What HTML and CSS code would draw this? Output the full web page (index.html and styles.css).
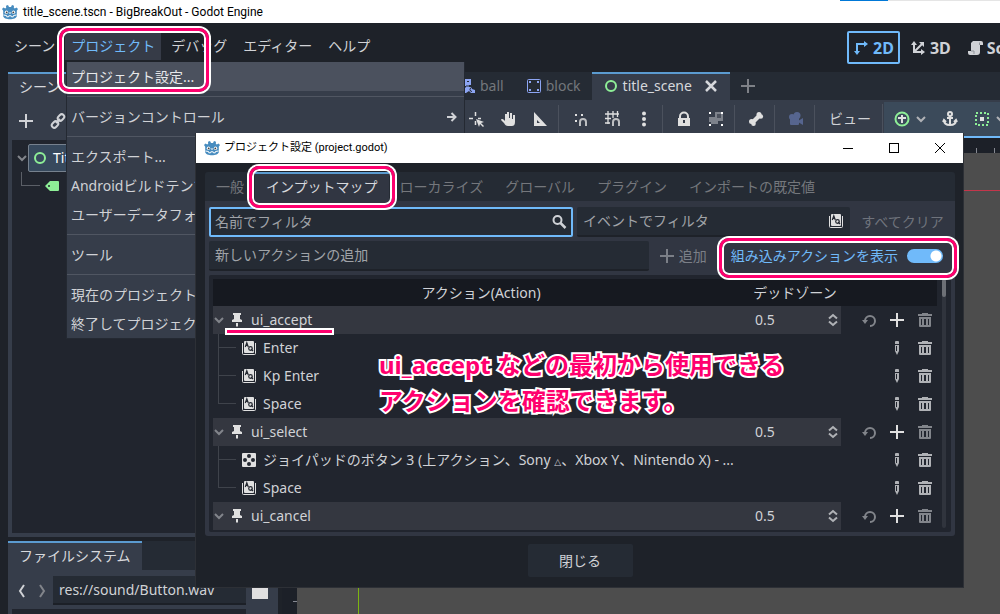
FILE: index.html
```html
<!DOCTYPE html>
<html lang="ja">
<head>
<meta charset="utf-8">
<title>title_scene.tscn - BigBreakOut - Godot Engine</title>
<link rel="stylesheet" href="styles.css">
</head>
<body>
<svg class="defs" aria-hidden="true">
  <symbol id="godot" viewBox="0 0 16 16">
    <path fill="#478cbf" d="M6 1l1 2h2l1-2 2 .7-.2 2 1 .8 1.700-1L16 5l-1.200 1.700V12c0 2-3.500 3.300-6.800 3.300S1.200 14 1.200 12V6.700L0 5l1.500-1.500 1.700 1 1-.8-.2-2z"/>
    <circle cx="4.500" cy="8.300" r="1.700" fill="#fff"/><circle cx="11.500" cy="8.300" r="1.700" fill="#fff"/>
    <circle cx="4.700" cy="8.400" r=".9" fill="#414042"/><circle cx="11.300" cy="8.400" r=".9" fill="#414042"/>
    <path fill="none" stroke="#fff" d="M8 8v2M1.500 11l3 .5.3 1.300h1.700l.3-1h2.400l.3 1h1.700l.3-1.300 3-.5"/>
  </symbol>
  <symbol id="plus" viewBox="0 0 16 16"><path fill="none" stroke="currentColor" stroke-width="2" d="M8 1v14M1 8h14"/></symbol>
  <symbol id="link" viewBox="0 0 16 16"><g fill="none" stroke="currentColor" stroke-width="2"><rect x="7.500" y="2" width="7" height="5" rx="2.500" transform="rotate(-45 11 4.500)"/><rect x="1.500" y="9" width="7" height="5" rx="2.500" transform="rotate(-45 5 11.500)"/><path d="M6 10l4-4"/></g></symbol>
  <symbol id="chevron" viewBox="0 0 10 10"><path fill="none" stroke="currentColor" stroke-width="2" d="M1 3l4 4 4-4"/></symbol>
  <symbol id="ring" viewBox="0 0 16 16"><circle cx="8" cy="8" r="5" fill="none" stroke="#8eef97" stroke-width="2"/></symbol>
  <symbol id="tag" viewBox="0 0 16 16"><path fill="#8eef97" fill-rule="evenodd" d="M6 3h8a1 1 0 0 1 1 1v8a1 1 0 0 1-1 1H6L1 8zM5 7a1 1 0 0 0 0 2 1 1 0 0 0 0-2"/></symbol>
  <symbol id="body" viewBox="0 0 16 16"><path fill="#8da5f3" d="M4 1h7v6h-2v2h3v2l3 1v3h-4l-2-2-3 2H3v-3l3-3V8H3V5h1z"/><path fill="none" stroke="#252b34" d="M7 3.500h2M6 8h3M15 9.500h-3a2 2 0 0 0 0 4"/></symbol>
  <symbol id="area" viewBox="0 0 16 16"><rect x="1.500" y="1.500" width="13" height="13" rx="1" fill="none" stroke="#8da5f3"/><path fill="#8da5f3" d="M3 3h2v2H3zM11 3h2v2h-2zM3 11h2v2H3zM11 11h2v2h-2z"/></symbol>
  <symbol id="close" viewBox="0 0 16 16"><path fill="none" stroke="currentColor" stroke-width="2.500" d="M3 3l10 10M13 3L3 13"/></symbol>
  <symbol id="pivot" viewBox="0 0 16 16"><path fill="none" stroke="currentColor" stroke-width="1.500" d="M7.500 1v4M1 7.500h4M7.500 10v4M10 7.500h3"/><path fill="currentColor" d="M8 8l8 3-3 1 3 3-1 1-3-3-1 3z"/></symbol>
  <symbol id="hand" viewBox="0 0 16 16"><path fill="currentColor" d="M7 1h2v6h1V2h2v6h1V4h2v7c0 3-1.500 4-3 4H8c-2 0-3-1-4-3L1 9c0-1.500 2-1.500 3 0l1 1V3h2z"/></symbol>
  <symbol id="ruler" viewBox="0 0 16 16"><path fill="currentColor" fill-rule="evenodd" d="M2 1l13 14H2zm3 8v3h3z"/></symbol>
  <symbol id="snap" viewBox="0 0 16 16"><path fill="currentColor" d="M3 3h2v2H3zM9 3h2v2H9zM3 9h2v2H3z"/><path fill="none" stroke="currentColor" stroke-width="2" d="M8 15v-4a3 3 0 0 1 6 0v4" opacity=".8"/></symbol>
  <symbol id="gridsnap" viewBox="0 0 16 16"><path fill="none" stroke="currentColor" stroke-width="1.300" d="M4 0v13M9 0v7M13.500 0v6M1 3h14M1 7.500h6M1 12h5"/><path fill="none" stroke="currentColor" stroke-width="2" d="M9 15v-4a3 3 0 0 1 6 0v4" opacity=".8"/></symbol>
  <symbol id="dots" viewBox="0 0 16 16"><circle cx="8" cy="2.500" r="2" fill="currentColor"/><circle cx="8" cy="8" r="2" fill="currentColor"/><circle cx="8" cy="13.500" r="2" fill="currentColor"/></symbol>
  <symbol id="lock" viewBox="0 0 16 16"><path fill="none" stroke="currentColor" stroke-width="2" d="M4 8V5.500a4 4 0 0 1 8 0V8"/><path fill="currentColor" fill-rule="evenodd" d="M2 7h12v8H2zm5 2v3h2V9z"/></symbol>
  <symbol id="group" viewBox="0 0 16 16"><path fill="#7d828b" d="M7 1h6v2h2v7h-5v3H3v-2H1V6h6z"/><path fill="#4b515d" d="M9 3h4v4H9z"/><path fill="#fff" d="M1 1h2v2H1zM13 1h2v2h-2zM1 13h2v2H1zM13 13h2v2h-2z"/></symbol>
  <symbol id="bone" viewBox="0 0 16 16"><g fill="currentColor"><path d="M4 9l6-6 3 3-6 6z"/><circle cx="11" cy="3.500" r="2.500"/><circle cx="12.800" cy="5.500" r="2.300"/><circle cx="3.500" cy="10.500" r="2.500"/><circle cx="5.500" cy="12.800" r="2.300"/></g></symbol>
  <symbol id="camera" viewBox="0 0 16 16"><g fill="#56658f"><circle cx="9" cy="4.500" r="3.500"/><circle cx="4" cy="6" r="3"/><rect x="2" y="6" width="9" height="8" rx="1"/><path d="M10 10l5-3v7l-5-3z"/></g></symbol>
  <symbol id="container" viewBox="0 0 16 16"><circle cx="8" cy="8" r="6.500" fill="none" stroke="#8eef97" stroke-width="2"/><path fill="none" stroke="#e0e0e0" stroke-width="2" d="M8 4v8M4 7h8"/></symbol>
  <symbol id="anchor" viewBox="0 0 16 16"><g fill="none" stroke="currentColor" stroke-width="2"><circle cx="8" cy="3" r="2"/><path d="M8 5v9M5 7h6M2 9c0 4 3 5 6 5s6-1 6-5M1 11l1-2 2 2M15 11l-1-2-2 2"/></g></symbol>
  <symbol id="marquee" viewBox="0 0 16 16"><rect x="2" y="2" width="12" height="12" fill="none" stroke="#8eef97" stroke-width="2" stroke-dasharray="2 2"/><path fill="#e0e0e0" d="M6 6h4v4H6z"/></symbol>
  <symbol id="axes2" viewBox="0 0 16 16"><path fill="none" stroke="currentColor" stroke-width="2" d="M4 12V4h8"/><path fill="currentColor" d="M1 11h6l-3 4zM11 1v6l4-3z"/></symbol>
  <symbol id="axes3" viewBox="0 0 16 16"><path fill="none" stroke="currentColor" stroke-width="2" d="M4 4v8h8M4 12l8-8"/><path fill="currentColor" d="M1 5h6L4 1zM11 9v6l4-3zM9 2h5v5z"/></symbol>
  <symbol id="script" viewBox="0 0 16 16"><path fill="currentColor" d="M6 1h8a2 2 0 0 1 2 2v2h-3v7a3 3 0 0 1-3 3H3a2 2 0 0 1-2-2v-2h3V3z"/><path fill="none" stroke="#90949b" d="M12.500 5V2.500M4 11h3v3"/></symbol>
  <symbol id="arrow" viewBox="0 0 10 10"><path fill="none" stroke="currentColor" stroke-width="2" d="M0 5h8M4.500 1l4 4-4 4"/></symbol>
  <symbol id="search" viewBox="0 0 16 16"><circle cx="6.500" cy="6" r="4" fill="none" stroke="currentColor" stroke-width="2"/><path stroke="currentColor" stroke-width="2.500" d="M9.500 9l5 5"/></symbol>
  <symbol id="key" viewBox="0 0 16 16"><path fill="none" stroke="#e0e0e0" d="M1.500 3v10.500a1 1 0 0 0 1 1h11a1 1 0 0 0 1-1V3"/><rect x="3" y="1" width="10" height="12" rx="1" fill="#e0e0e0"/><path fill="none" stroke="#22262f" stroke-width="1.200" d="M4.300 7l1.500-4.300L7.300 7M5 5.500h2"/><circle cx="9.500" cy="8.500" r="1.800" fill="none" stroke="#22262f" stroke-width="1.200"/><path stroke="#22262f" stroke-width="1.200" d="M10 9l2 2"/></symbol>
  <symbol id="joy" viewBox="0 0 16 16"><rect x="1" y="1" width="14" height="14" rx="1" fill="#e0e0e0"/><g fill="#22262f"><circle cx="8" cy="4" r="2"/><circle cx="8" cy="12" r="2"/><circle cx="4" cy="8" r="2"/><circle cx="12" cy="8" r="2"/></g></symbol>
  <symbol id="pin" viewBox="0 0 16 16"><path fill="currentColor" d="M4 1h8v2h-1v4l2 1v2H3V8l2-1V3H4zM7 11h2v3l-1 1-1-1z"/></symbol>
  <symbol id="updown" viewBox="0 0 10 14"><path fill="none" stroke="currentColor" stroke-width="2" d="M1 5.500L5 2l4 3.500M1 8.500L5 12l4-3.500"/></symbol>
  <symbol id="undo" viewBox="0 0 16 16"><path fill="none" stroke="currentColor" stroke-width="2" d="M4 9a5 5 0 1 1 5 5"/><path fill="currentColor" d="M1 8h6l-3 4z"/></symbol>
  <symbol id="trash" viewBox="0 0 16 16"><path fill="currentColor" fill-rule="evenodd" d="M5 1h6v1h4v2H1V2h4zM2 5h12v9a1 1 0 0 1-1 1H3a1 1 0 0 1-1-1zm2 2v6h1V7zm3 0v6h2V7zm4 0v6h1V7z"/></symbol>
  <symbol id="pencil" viewBox="0 0 16 16"><path fill="currentColor" fill-rule="evenodd" d="M7 1h2a1 1 0 0 1 1 1v2H6V2a1 1 0 0 1 1-1zM6 5h4v6l-2 4-2-4zm1 1v5h1V6z"/></symbol>
  <symbol id="prev" viewBox="0 0 8 14"><path fill="none" stroke="currentColor" stroke-width="2" d="M6 1L2 7l4 6"/></symbol>
  <symbol id="next" viewBox="0 0 8 14"><path fill="none" stroke="currentColor" stroke-width="2" d="M2 1l4 6-4 6"/></symbol>
</svg>

<div class="screen">
  <header class="titlebar"><svg class="i16"><use href="#godot"/></svg><span>title_scene.tscn - BigBreakOut - Godot Engine</span><i class="backdrop-edge"></i></header>

  <nav class="menubar">
    <button>シーン</button><button class="open">プロジェクト</button><button>デバッグ</button><button>エディター</button><button>ヘルプ</button>
    <div class="modes">
      <button class="current"><svg class="i16"><use href="#axes2"/></svg>2D</button>
      <button><svg class="i16"><use href="#axes3"/></svg>3D</button>
      <button><svg class="i16"><use href="#script"/></svg>Script</button>
    </div>
  </nav>

  <main class="editor">
    <aside class="docks">
      <section class="dock scene-dock">
        <div class="tabs"><button class="tab active">シーン</button></div>
        <div class="dock-tools"><button><svg class="i16"><use href="#plus"/></svg></button><button><svg class="i16"><use href="#link"/></svg></button></div>
        <div class="scene-tree">
          <div class="node"><svg class="i10 dim"><use href="#chevron"/></svg><span class="picked"><svg class="i16"><use href="#ring"/></svg>TitleScene</span></div>
          <div class="node child"><i class="elbow"></i><svg class="i16"><use href="#tag"/></svg></div>
        </div>
      </section>
      <section class="dock files-dock">
        <div class="tabs"><button class="tab active">ファイルシステム</button></div>
        <div class="path-row">
          <button><svg class="step"><use href="#prev"/></svg></button><button class="dim"><svg class="step"><use href="#next"/></svg></button>
          <input type="text" aria-label="パス" value="res://sound/Button.wav"><i class="split"></i>
        </div>
        <div class="files-list"></div>
      </section>
    </aside>

    <section class="viewport">
      <div class="scene-tabs">
        <button class="tab"><svg class="i16"><use href="#body"/></svg>ball</button>
        <button class="tab"><svg class="i16"><use href="#area"/></svg>block</button>
        <button class="tab active"><svg class="i16"><use href="#ring"/></svg>title_scene<svg class="i16 shut"><use href="#close"/></svg></button>
        <button class="add-tab" aria-label="シーンを追加"><svg class="i16"><use href="#plus"/></svg></button>
      </div>
      <div class="toolbar">
        <div class="tools">
          <button><svg class="i16"><use href="#pivot"/></svg></button>
          <button><svg class="i16"><use href="#hand"/></svg></button>
          <button><svg class="i16"><use href="#ruler"/></svg></button>
          <i class="sep"></i>
          <button><svg class="i16"><use href="#snap"/></svg></button>
          <button><svg class="i16"><use href="#gridsnap"/></svg></button>
          <button><svg class="i16"><use href="#dots"/></svg></button>
          <i class="sep"></i>
          <button><svg class="i16"><use href="#lock"/></svg></button>
          <button><svg class="i16"><use href="#group"/></svg></button>
          <i class="sep"></i>
          <button><svg class="i16"><use href="#bone"/></svg></button>
          <i class="sep"></i>
          <button><svg class="i16"><use href="#camera"/></svg></button>
          <i class="sep"></i>
          <button class="view">ビュー</button>
        </div>
        <div class="context">
          <button><svg class="i16"><use href="#container"/></svg><svg class="i10 soft"><use href="#chevron"/></svg></button>
          <button><svg class="i16"><use href="#anchor"/></svg></button>
          <button><svg class="i16"><use href="#marquee"/></svg><svg class="i10 soft"><use href="#chevron"/></svg></button>
        </div>
      </div>
      <div class="canvas"><i class="axis-x"></i><i class="axis-y"></i><i class="tick t1"></i><i class="tick t2"></i><i class="tick t3"></i></div>
    </section>
  </main>

  <div class="popup" role="menu">
    <button class="hover">プロジェクト設定...</button><hr>
    <button>バージョンコントロール<svg class="i10"><use href="#arrow"/></svg></button><hr>
    <button>エクスポート...</button>
    <button>Androidビルドテンプレート</button>
    <button>ユーザーデータフォルダ</button><hr>
    <button>ツール</button><hr>
    <button>現在のプロジェクトを</button>
    <button>終了してプロジェクト</button>
  </div>

  <section class="dialog" role="dialog" aria-label="プロジェクト設定">
    <header class="dialog-title"><svg class="i16"><use href="#godot"/></svg><span>プロジェクト設定 (project.godot)</span>
      <div class="window-buttons">
        <button aria-label="最小化"><svg class="i10"><path d="M0 5.500h10" stroke="#000"/></svg></button>
        <button aria-label="最大化"><svg class="i10"><rect x=".5" y=".5" width="9" height="9" fill="none" stroke="#000"/></svg></button>
        <button aria-label="閉じる"><svg class="i10"><path d="M0 0l10 10M10 0L0 10" stroke="#000"/></svg></button>
      </div>
    </header>
    <div class="dialog-body">
      <div class="dialog-tabs"><button class="tab">一般</button><button class="tab active">インプットマップ</button><button class="tab">ローカライズ</button><button class="tab">グローバル</button><button class="tab">プラグイン</button><button class="tab">インポートの既定値</button></div>
      <div class="pane">
        <div class="filter-row">
          <label class="field focused"><input type="text" aria-label="名前でフィルタ" placeholder="名前でフィルタ"><svg class="i16"><use href="#search"/></svg></label>
          <label class="field"><input type="text" aria-label="イベントでフィルタ" placeholder="イベントでフィルタ"><svg class="i16"><use href="#key"/></svg></label>
          <button class="clear" disabled>すべてクリア</button>
        </div>
        <div class="form-row">
          <label class="field new-action"><input type="text" aria-label="新しいアクションの追加" placeholder="新しいアクションの追加"></label>
          <button class="add" disabled><svg class="i16"><use href="#plus"/></svg>追加</button>
          <label class="toggle">組み込みアクションを表示<input type="checkbox" checked></label>
        </div>
        <div class="map">
          <table>
            <colgroup><col><col class="c-zone"><col class="c-tools"></colgroup>
            <thead><tr><th>アクション(Action)</th><th>デッドゾーン</th><th></th></tr></thead>
            <tbody>
              <tr class="action"><td><div class="cell"><svg class="i10 dim"><use href="#chevron"/></svg><svg class="i16"><use href="#pin"/></svg>ui_accept</div></td><td><div class="zone">0.5<svg class="spin"><use href="#updown"/></svg></div></td><td><div class="acts"><button><svg class="i16 dim"><use href="#undo"/></svg></button><button><svg class="i16"><use href="#plus"/></svg></button><button><svg class="i16 dim"><use href="#trash"/></svg></button></div></td></tr>
              <tr><td><div class="cell event"><i class="branch"></i><svg class="i16"><use href="#key"/></svg>Enter</div></td><td></td><td><div class="acts soft"><button><svg class="i16"><use href="#pencil"/></svg></button><button><svg class="i16"><use href="#trash"/></svg></button></div></td></tr>
              <tr><td><div class="cell event"><i class="branch"></i><svg class="i16"><use href="#key"/></svg>Kp Enter</div></td><td></td><td><div class="acts soft"><button><svg class="i16"><use href="#pencil"/></svg></button><button><svg class="i16"><use href="#trash"/></svg></button></div></td></tr>
              <tr><td><div class="cell event"><i class="branch last"></i><svg class="i16"><use href="#key"/></svg>Space</div></td><td></td><td><div class="acts soft"><button><svg class="i16"><use href="#pencil"/></svg></button><button><svg class="i16"><use href="#trash"/></svg></button></div></td></tr>
              <tr class="action"><td><div class="cell"><svg class="i10 dim"><use href="#chevron"/></svg><svg class="i16"><use href="#pin"/></svg>ui_select</div></td><td><div class="zone">0.5<svg class="spin"><use href="#updown"/></svg></div></td><td><div class="acts"><button><svg class="i16 dim"><use href="#undo"/></svg></button><button><svg class="i16"><use href="#plus"/></svg></button><button><svg class="i16 dim"><use href="#trash"/></svg></button></div></td></tr>
              <tr><td><div class="cell event"><i class="branch"></i><svg class="i16"><use href="#joy"/></svg><span>ジョイパッドのボタン 3 (上アクション、Sony <small>△</small>、Xbox Y、Nintendo X) - ...</span></div></td><td></td><td><div class="acts soft"><button><svg class="i16"><use href="#pencil"/></svg></button><button><svg class="i16"><use href="#trash"/></svg></button></div></td></tr>
              <tr><td><div class="cell event"><i class="branch last"></i><svg class="i16"><use href="#key"/></svg>Space</div></td><td></td><td><div class="acts soft"><button><svg class="i16"><use href="#pencil"/></svg></button><button><svg class="i16"><use href="#trash"/></svg></button></div></td></tr>
              <tr class="action"><td><div class="cell"><svg class="i10 dim"><use href="#chevron"/></svg><svg class="i16"><use href="#pin"/></svg>ui_cancel</div></td><td><div class="zone">0.5<svg class="spin"><use href="#updown"/></svg></div></td><td><div class="acts"><button><svg class="i16 dim"><use href="#undo"/></svg></button><button><svg class="i16"><use href="#plus"/></svg></button><button><svg class="i16 dim"><use href="#trash"/></svg></button></div></td></tr>
            </tbody>
          </table>
          <div class="scrollbar"><i></i></div>
        </div>
      </div>
      <footer><button>閉じる</button></footer>
    </div>
  </section>

  <i class="mark mark-menu"></i>
  <i class="mark mark-tab"></i>
  <i class="mark mark-toggle"></i>
  <i class="underline"></i>
  <p class="note">ui_accept などの最初から使用できる<br>アクションを確認できます。</p>
</div>
</body>
</html>
```

FILE: styles.css
```css
* { box-sizing: border-box; }
body {
  margin: 0;
  background: #1e2229;
  color: #d0d2d6;
  font: 14px/20px "Noto Sans", "Noto Sans CJK JP", sans-serif;
}
button, input {
  font: inherit;
  color: inherit;
  background: none;
  border: 0;
  padding: 0;
  margin: 0;
  border-radius: 0;
}
button { display: flex; align-items: center; justify-content: center; white-space: nowrap; }
input { min-width: 0; outline: 0; }
svg { display: block; flex: none; }
i { display: block; flex: none; }
.defs { position: absolute; width: 0; height: 0; }
.i16 { width: 16px; height: 16px; }
.i10 { width: 10px; height: 10px; }
.dim { color: #82858b; }
.soft { color: #b0b2b6; }

.screen { position: relative; display: flex; flex-direction: column; height: 100vh; overflow: hidden; }
.titlebar {
  position: relative;
  display: flex;
  align-items: center;
  gap: 5px;
  flex: none;
  height: 23px;
  padding-left: 2px;
  background: #fff;
  color: #000;
  font: 12px/16px Roboto, sans-serif;
}
.backdrop-edge { position: absolute; top: 0; right: 0; width: 160px; height: 1px; background: linear-gradient(90deg, #0078d7 48px, #e5e5e5 48px); }

.menubar { display: flex; align-items: center; gap: 4px; flex: none; height: 49px; padding-left: 8px; }
.menubar > button { height: 28px; margin-bottom: 4px; padding: 0 6px; }
.menubar > .open { background: #363b47; color: #70bafa; }
.modes { display: flex; gap: 4px; width: 153px; margin-left: auto; overflow: hidden; font-weight: 700; font-size: 16px; }
.modes button { flex: none; gap: 4px; height: 33px; padding: 0 6px; }
.modes .current { border: 2px solid #70bafa; border-radius: 2px; padding: 0 4px; color: #70bafa; }

.editor { display: flex; flex: 1; min-height: 0; }
.docks { display: flex; flex-direction: column; gap: 4px; flex: none; width: 278px; padding-left: 8px; }
.dock { display: flex; flex-direction: column; background: #363d4a; }
.scene-dock { flex: 1; min-height: 0; padding-bottom: 4px; }
.files-dock { flex: none; height: 73px; }
.tabs, .scene-tabs, .dialog-tabs { display: flex; flex: none; background: #252b34; }
.tab { gap: 4px; height: 29px; padding: 0 11px 2px; color: #74777c; border-top: 2px solid transparent; }
.tab.active { background: #363d4a; color: #d6d8dc; border-top-color: #5b9bd0; }
.dock-tools { display: flex; gap: 16px; height: 39px; padding-left: 10px; }
.scene-tree { flex: 1; margin: 0 4px; padding: 4px 5px; background: #21252e; }
.node { display: flex; align-items: center; gap: 1px; height: 28px; }
.picked { display: flex; align-items: center; gap: 5px; flex: 1; height: 28px; padding-left: 3px; background: #37495d; border: 1px solid #76818e; border-radius: 2px; color: #fff; }
.node.child { gap: 4px; padding-left: 4px; }
.elbow { width: 19px; height: 14px; align-self: flex-start; border: solid #5b5f67; border-width: 0 0 1px 1px; }
.path-row { display: flex; align-items: center; gap: 3px; flex: none; height: 29px; margin-top: 6px; padding: 0 10px 0 5px; }
.path-row button { width: 17px; }
.path-row input { flex: 1; height: 29px; padding: 0 6px; background: #252b34; border-bottom: 2px solid #1c2027; }
.step { width: 8px; height: 14px; }
.split { width: 16px; height: 16px; margin-left: 3px; background: #e0e0e0; }
.files-list { flex: 1; margin: 4px 32px 0 4px; background: #21252e; }

.viewport { display: flex; flex-direction: column; flex: 1; min-width: 0; padding-left: 4px; }
.scene-tabs { height: 28px; padding-left: 167px; }
.scene-tabs .tab { flex: none; height: 28px; }
.shut { margin-left: 7px; }
.add-tab { width: 36px; color: #7e8187; }
.toolbar { display: flex; flex: none; height: 38px; background: #363d4a; }
.tools { display: flex; align-items: center; gap: 4px; margin: 4px 0; padding: 0 4px 0 180px; border-right: 1px solid #4b515d; }
.tools button { flex: none; width: 28px; color: #e0e0e0; }
.tools .view { width: 56px; color: #d0d2d6; }
.sep { width: 4px; height: 28px; border-left: 1px solid #4b515d; }
.context { display: flex; align-items: center; gap: 16px; flex: 1; margin: 2px 0 0 1px; padding-left: 10px; background: #3b4a5a; border-bottom: 2px solid #70bafa; overflow: hidden; color: #e0e0e0; }
.context button { flex: none; gap: 6px; }
.canvas { position: relative; flex: 1; background: #4d4d4d; border: solid #1c2028; border-width: 15px 0 0 15px; }
.axis-x, .axis-y, .tick { position: absolute; }
.axis-x { left: 0; right: 0; top: 37px; height: 1px; background: #c3364b; }
.axis-y { top: 0; bottom: 0; left: 61px; width: 1px; background: #7db510; }
.tick { background: #858891; }
.t1, .t2 { top: -5px; width: 1px; height: 5px; }
.t1 { left: 679px; }
.t2 { left: 697px; }
.t3 { left: -4px; top: 448px; width: 4px; height: 1px; }

.popup { position: absolute; left: 66px; top: 62px; width: 399px; background: #363d4a; border: solid #242932; border-width: 0 1px 1px; }
.popup button { width: 100%; height: 29px; padding: 0 7px 0 4px; justify-content: space-between; }
.popup .hover { background: #4b515e; color: #e6e7e9; }
.popup hr { height: 1px; margin: 5px 0; border: 0; background: #505662; }

.dialog { position: absolute; left: 195px; top: 133px; width: 769px; border: solid #2d3036; border-width: 0 1px 1px; background: #1e2229; }
.dialog-title { display: flex; align-items: center; gap: 4px; height: 30px; padding-left: 8px; background: #fff; color: #000; font: 11px/16px Roboto, "Noto Sans CJK JP", sans-serif; }
.window-buttons { display: flex; margin-left: auto; }
.window-buttons button { width: 46px; height: 30px; }
.dialog-body { padding: 9px 8px 10px 9px; }
.dialog-tabs { border-radius: 3px 3px 0 0; }
.pane { display: flex; flex-direction: column; gap: 4px; padding: 6px 4px 4px; background: #313642; border-radius: 0 0 3px 3px; }
.dialog-tabs .active { background: #313642; }
.filter-row { display: grid; grid-template-columns: 4fr 3fr 97px; gap: 4px; }
.form-row { display: flex; gap: 4px; }
.field { display: flex; align-items: center; height: 30px; padding: 0 6px; background: #252b34; border-bottom: 2px solid #1e2229; border-radius: 2px; }
.field input { flex: 1; }
.field input::placeholder { color: #a0a3a8; opacity: 1; }
.field.focused { padding: 0 4px; border: 2px solid #70bafa; }
.new-action { flex: 1; }
.clear { color: #6f737c; }
.add { gap: 4px; padding: 0 6px; color: #7b7f87; }
.toggle { display: flex; align-items: center; gap: 9px; padding: 0 8px 0 14px; color: #70bafa; white-space: nowrap; }
.toggle input { appearance: none; width: 36px; height: 14px; border-radius: 7px; background: radial-gradient(circle at 29px 7px, #fff 5px, #70bafa 6px); }
.map { display: flex; gap: 5px; padding: 4px 5px 2px 4px; background: #21252e; border-radius: 2px; }
table { flex: 1; border-collapse: collapse; table-layout: fixed; }
th, td { padding: 0; }
th { height: 27px; font-weight: 400; background: #161920; }
td { height: 28px; }
.c-zone { width: 92px; }
.c-tools { width: 96px; }
.action td:not(:last-child) { background: #343740; }
.cell { display: flex; align-items: center; gap: 6px; white-space: pre; }
.cell .i10 { margin: 0 -1px 0 1px; }
.cell .i16 { color: #e0e0e0; }
.event { padding-left: 5px; }
.cell small { font: 9px "DejaVu Sans", sans-serif; }
.branch { width: 18px; height: 28px; margin-right: -1px; background: linear-gradient(#3f434b, #3f434b) 0 13px / 18px 1px no-repeat, linear-gradient(#3f434b, #3f434b) 0 0 / 1px 28px no-repeat; }
.branch.last { background-size: 18px 1px, 1px 13px; }
.zone { display: flex; align-items: center; justify-content: space-between; padding: 0 3px 0 6px; }
.spin { width: 10px; height: 14px; color: #b0b2b6; }
.acts { display: flex; justify-content: flex-end; gap: 4px; color: #e0e0e0; }
.acts.soft { color: #b0b2b6; }
.acts button { width: 24px; height: 28px; }
.scrollbar { width: 4px; margin-bottom: 2px; border-radius: 2px; background: #30343d; }
.scrollbar i { height: 18px; border-radius: 2px; background: #6d7076; }
footer { display: flex; justify-content: center; padding-top: 8px; }
footer button { width: 105px; height: 33px; background: #252b34; border-radius: 2px; }

.mark { position: absolute; border: 3px solid #ff006e; border-radius: 10px; box-shadow: 0 0 0 2px #fff, inset 0 0 0 2px #fff; pointer-events: none; }
.mark-menu { left: 59px; top: 28px; width: 150px; height: 64px; }
.mark-tab { left: 249px; top: 166px; width: 146px; height: 42px; }
.mark-toggle { left: 719px; top: 238px; width: 238px; height: 40px; }
.underline { position: absolute; left: 225px; top: 328px; width: 109px; height: 7px; background: #ff006e; border: 2px solid #fff; }
.note { position: absolute; left: 379px; top: 347px; margin: 0; color: #ff006e; font-size: 24px; line-height: 36px; font-weight: 700; white-space: nowrap; -webkit-text-stroke: 4px #fff; paint-order: stroke fill; }
```
